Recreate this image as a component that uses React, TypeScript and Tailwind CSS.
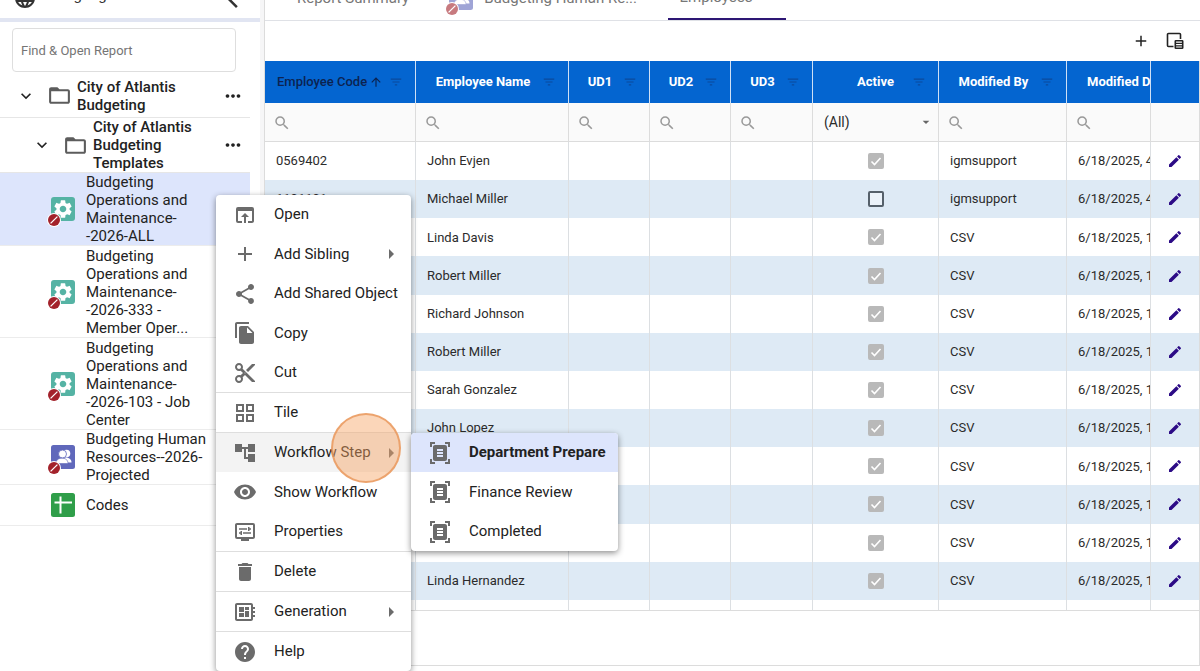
import type { ReactNode } from "react";
import type { IconType } from "react-icons";
import {
  MdAccountTree,
  MdAdd,
  MdArrowDropDown,
  MdArrowRight,
  MdArrowUpward,
  MdContentCut,
  MdDelete,
  MdDocumentScanner,
  MdEdit,
  MdExpandMore,
  MdFileCopy,
  MdFilterList,
  MdFolderOpen,
  MdGridView,
  MdHelp,
  MdLanguage,
  MdMoreHoriz,
  MdOpenInBrowser,
  MdOutlineDeveloperBoard,
  MdOutlineDisplaySettings,
  MdSearch,
  MdSettings,
  MdShare,
  MdVisibility,
  MdArrowBackIosNew,
} from "react-icons/md";

type ReportKind = "gear" | "people" | "codes";

function Blocked() {
  return (
    <svg viewBox="0 0 14 14" className="absolute -bottom-1.5 -left-1 size-3.5" aria-hidden="true">
      <circle cx="7" cy="7" r="7" fill="#fff" />
      <circle cx="7" cy="7" r="6" fill="#a3222b" />
      <path d="M3.6 10.4 10.4 3.6" stroke="#fff" strokeWidth="1.3" />
    </svg>
  );
}

function ReportIcon({ kind }: { kind: ReportKind }) {
  if (kind === "codes") {
    return (
      <svg viewBox="0 0 24 24" className="size-6 shrink-0" aria-hidden="true">
        <rect width="24" height="24" rx="2.5" fill="#2f9e49" />
        <path d="M9.5 3.5v17M3.5 9.5h17.5" stroke="#fff" strokeWidth="2" />
      </svg>
    );
  }
  return (
    <span className="relative block size-6 shrink-0">
      {kind === "gear" ? (
        <span className="flex size-6 items-center justify-center rounded-[3px] bg-[#55b3a4]">
          <MdSettings className="size-[22px] text-white" />
        </span>
      ) : (
        <svg viewBox="0 0 24 24" className="size-6" aria-hidden="true">
          <rect width="24" height="24" rx="2.5" fill="#6068bb" />
          <circle cx="15.5" cy="8.5" r="3.8" fill="#fff" />
          <path d="M13 12.5c4-.5 7.500 1 7.500 5h-5z" fill="#fff" />
          <circle cx="11.500" cy="9" r="4" fill="#fff" stroke="#6068bb" strokeWidth=".8" />
          <path d="M5 18.500c0-4 3-5.300 6-5.300s6 1.300 6 5.300z" fill="#fff" stroke="#6068bb" strokeWidth=".6" />
        </svg>
      )}
      <Blocked />
    </span>
  );
}

const reports: { kind: ReportKind; lines: string[]; size: string; selected?: boolean }[] = [
  { kind: "gear", lines: ["Budgeting", "Operations and", "Maintenance-", "-2026-ALL"], size: "min-h-[73px]", selected: true },
  { kind: "gear", lines: ["Budgeting", "Operations and", "Maintenance-", "-2026-333 -", "Member Oper..."], size: "min-h-[92px]" },
  { kind: "gear", lines: ["Budgeting", "Operations and", "Maintenance-", "-2026-103 - Job", "Center"], size: "min-h-[92px]" },
  { kind: "people", lines: ["Budgeting Human", "Resources--2026-", "Projected"], size: "min-h-[55px]" },
  { kind: "codes", lines: ["Codes"], size: "min-h-[41px]" },
];

function Folder({ lines, className }: { lines: string[]; className: string }) {
  return (
    <li className={`flex items-center border-b border-[#e6e6e6] pr-1.5 ${className}`}>
      <button aria-label="Collapse" className="flex size-5 items-center justify-center">
        <MdExpandMore className="size-5" />
      </button>
      <MdFolderOpen className="ml-[11px] size-[25px] shrink-0 text-[#5c5c5c]" />
      <span className="ml-[5px] flex-1 font-medium">
        {lines.map((l) => (
          <span key={l} className="block">{l}</span>
        ))}
      </span>
      <button aria-label="More">
        <MdMoreHoriz className="size-[22px]" />
      </button>
    </li>
  );
}

function Sidebar() {
  return (
    <aside className="flex w-[265px] shrink-0 flex-col border-r border-[#dcdcdc] bg-[#f6f6f7]">
      <div className="mr-1 flex flex-1 flex-col bg-white">
        <div className="flex h-[22px] shrink-0 items-end border-b-4 border-[#e1e5f2]">
          <div className="flex h-10 w-full items-center pr-4 pl-[13px] text-[15px] text-[#333]">
            <MdLanguage className="size-6 shrink-0" />
            <button className="ml-3 flex flex-1 items-center gap-2 pb-1.5">
              Language: US
              <MdExpandMore className="size-4" />
            </button>
            <button aria-label="Collapse sidebar">
              <MdArrowBackIosNew className="size-6" />
            </button>
          </div>
        </div>
        <div className="pt-1.5 pr-6 pl-3">
          <input
            aria-label="Find & Open Report"
            placeholder="Find & Open Report"
            className="h-11 w-full rounded border border-[#dedede] px-2 text-[13px] placeholder:text-[#757575]"
          />
        </div>
        <ul className="mr-2.5 text-[15px] leading-[18px] text-[#222]">
          <Folder lines={["City of Atlantis", "Budgeting"]} className="min-h-[46px] pt-0.5 pl-4" />
          <Folder lines={["City of Atlantis", "Budgeting", "Templates"]} className="min-h-[55px] pl-8" />
          {reports.map((r) => (
            <li
              key={r.lines.join()}
              className={`flex items-center gap-[11px] border-b border-[#ececec] pl-[51px] ${r.size} ${r.selected ? "bg-[#dde5fc]" : ""}`}
            >
              <ReportIcon kind={r.kind} />
              <a href="#report">
                {r.lines.map((l) => (
                  <span key={l} className="block whitespace-nowrap">{l}</span>
                ))}
              </a>
            </li>
          ))}
        </ul>
      </div>
    </aside>
  );
}

const columns = [
  { label: "Employee Name", width: "w-[153px]" },
  { label: "UD1", width: "w-[81px]" },
  { label: "UD2", width: "w-[81px]" },
  { label: "UD3", width: "w-[82px]" },
  { label: "Active", width: "w-[126px]" },
  { label: "Modified By", width: "w-[128px]" },
];

const rows = [
  { code: "0569402", name: "John Evjen", by: "igmsupport", time: "4:10 PM", active: true },
  { code: "1101101", name: "Michael Miller", by: "igmsupport", time: "4:10 PM", active: false },
  ...[
    "Linda Davis",
    "Robert Miller",
    "Richard Johnson",
    "Robert Miller",
    "Sarah Gonzalez",
    "John Lopez",
    "",
    "",
    "",
    "Linda Hernandez",
  ].map((name) => ({ code: "", name, by: "CSV", time: "1:15 PM", active: true })),
];

function Search({ label }: { label: string }) {
  return (
    <td className="border-r border-b border-[#dcdcdc] px-2 pt-0.5">
      <label className="flex items-center">
        <MdSearch className="size-[18px] shrink-0 text-[#999]" />
        <input aria-label={`Filter ${label}`} className="w-full min-w-0 bg-transparent outline-none" />
      </label>
    </td>
  );
}

function Check({ checked }: { checked: boolean }) {
  return (
    <span className="relative mx-auto block size-4">
      <input
        type="checkbox"
        aria-label="Active"
        defaultChecked={checked}
        disabled={checked}
        className="block size-4 appearance-none rounded-[2px] border-2 border-[#55606a] bg-white/40 checked:border-[#b9b9b9] checked:bg-[#b9b9b9]"
      />
      {checked && (
        <svg viewBox="0 0 16 16" className="pointer-events-none absolute inset-0 size-4" aria-hidden="true">
          <path d="m3.500 8.500 3 3 6-6.500" fill="none" stroke="#fff" strokeWidth="1.600" />
        </svg>
      )}
    </span>
  );
}

function Grid() {
  return (
    <div className="h-[550px] overflow-hidden border-b border-[#dcdcdc]">
      <table className="h-[577px] w-full table-fixed border-separate border-spacing-0 text-[13px] text-[#2b2b2b]">
        <colgroup>
          <col className="w-[151px]" />
          {columns.map((c) => (
            <col key={c.label} className={c.width} />
          ))}
          <col />
          <col className="w-12" />
        </colgroup>
        <thead>
          <tr className="h-[42px] bg-[#0465d0] text-white">
            <th className="border-r border-[#cfe0f5] py-0 pr-3 pl-3 font-medium text-[#0c2350]">
              <span className="flex items-center whitespace-nowrap">
                Employee Code
                <MdArrowUpward className="ml-0.5 size-3.5" />
                <MdFilterList className="ml-auto size-3.5 text-[#0b4a9b]" />
              </span>
            </th>
            {columns.map((c) => (
              <th key={c.label} className="border-r border-[#cfe0f5] py-0 pr-3 pl-3 font-bold">
                <span className="flex items-center gap-1 whitespace-nowrap">
                  <span className={c.label === "Active" ? "flex-1 pl-[18px]" : "flex-1"}>{c.label}</span>
                  <MdFilterList className="size-3.5 text-[#0b4a9b]" />
                </span>
              </th>
            ))}
            <th className="overflow-hidden border-r border-[#cfe0f5] pl-5 text-left font-bold whitespace-nowrap">Modified Date</th>
            <th aria-label="Actions" />
          </tr>
          <tr className="h-[39px] bg-[#fafafa]">
            <Search label="Employee Code" />
            {columns.map((c) =>
              c.label === "Active" ? (
                <td key={c.label} className="border-r border-b border-[#dcdcdc] pr-1 pl-[11px]">
                  <span className="relative flex items-center">
                    <select aria-label="Filter Active" className="w-full appearance-none bg-transparent text-[14px]">
                      <option>(All)</option>
                    </select>
                    <MdArrowDropDown className="pointer-events-none absolute right-0 size-4 text-[#666]" />
                  </span>
                </td>
              ) : (
                <Search key={c.label} label={c.label} />
              ),
            )}
            <Search label="Modified Date" />
            <td className="border-b border-[#dcdcdc]" />
          </tr>
        </thead>
        <tbody>
          {rows.map((r, i) => (
            <tr key={i} className="even:bg-[#deeaf5] [&>td]:border-[#dcdfe2] [&>td]:py-0 [&>td:not(:last-child)]:border-r [&>td:not(:last-child)]:px-[11px]">
              <td>{r.code}</td>
              <td>{r.name}</td>
              <td />
              <td />
              <td />
              <td><Check checked={r.active} /></td>
              <td>{r.by}</td>
              <td className="overflow-hidden whitespace-nowrap">{`6/18/2025, ${r.time}`}</td>
              <td>
                <button aria-label="Edit" className="mx-auto flex text-[#2c0b86]">
                  <MdEdit className="size-4" />
                </button>
              </td>
            </tr>
          ))}
          <tr className="h-[38px] [&>td]:border-[#dcdfe2] [&>td:not(:last-child)]:border-r">
            {Array.from({ length: 9 }, (_, i) => (
              <td key={i} />
            ))}
          </tr>
        </tbody>
      </table>
    </div>
  );
}

function Main() {
  return (
    <main className="flex min-w-0 flex-1 flex-col bg-white">
      <nav className="flex h-[21px] shrink-0 items-end border-b border-[#dfe1e6] text-[15px] text-[#777]">
        <a href="#summary" className="flex h-11 items-center px-8">Report Summary</a>
        <a href="#hr" className="flex h-11 items-center gap-[11px] pr-[31px] pl-2">
          <span className="opacity-60"><ReportIcon kind="people" /></span>
          Budgeting Human Re...
        </a>
        <a href="#employees" className="flex h-11 w-[118px] items-center justify-center border-b-2 border-[#2d1674] pr-[22px]">Employees</a>
      </nav>
      <div className="flex h-10 shrink-0 items-center justify-end gap-4 pr-4 text-[#222]">
        <button aria-label="Add row"><MdAdd className="size-[18px]" /></button>
        <button aria-label="Column chooser">
          <svg viewBox="0 0 18 18" className="size-[18px]" fill="none" stroke="#222" aria-hidden="true">
            <path d="M7.500 14.500H2.500a1 1 0 0 1-1-1V2.500a1 1 0 0 1 1-1H13.500a1 1 0 0 1 1 1V7" strokeWidth="1.600" />
            <rect x="9.300" y="8.800" width="7.400" height="7.400" rx=".5" strokeWidth="1.600" />
            <path d="M9.500 11.300h7M9.500 13.800h7" strokeWidth="1.300" />
          </svg>
        </button>
      </div>
      <div className="flex min-h-[605px] flex-col border-r border-b border-[#dcdcdc]">
        <Grid />
      </div>
    </main>
  );
}

function MenuItem({ icon: Icon, children, arrow, className = "" }: { icon: IconType; children: ReactNode; arrow?: boolean; className?: string }) {
  return (
    <li>
      <button role="menuitem" className={`flex w-full items-center pl-[17px] text-left whitespace-nowrap ${className}`}>
        <Icon className="size-6 shrink-0 text-[#6b6b6b]" />
        <span className="ml-[17px] flex-1">{children}</span>
        {arrow && <MdArrowRight className="mr-2 size-6 text-[#6b6b6b]" />}
      </button>
    </li>
  );
}

function ContextMenu() {
  const line = "border-t border-[#dedede]";
  return (
    <ul role="menu" className="absolute top-[195px] left-[216px] w-[195px] rounded bg-white text-[15px] text-[#222] shadow-[0_2px_6px_rgba(0,0,0,0.45)]">
      <MenuItem icon={MdOpenInBrowser} className="h-[39px]">Open</MenuItem>
      <MenuItem icon={MdAdd} arrow className="h-10">Add Sibling</MenuItem>
      <MenuItem icon={MdShare} className="h-[39px]">Add Shared Object</MenuItem>
      <MenuItem icon={MdFileCopy} className="h-10">Copy</MenuItem>
      <MenuItem icon={MdContentCut} className="h-[39px]">Cut</MenuItem>
      <MenuItem icon={MdGridView} className={`h-10 ${line}`}>Tile</MenuItem>
      <MenuItem icon={MdAccountTree} arrow className={`h-10 bg-[#f3f3f3] ${line}`}>Workflow Step</MenuItem>
      <MenuItem icon={MdVisibility} className="h-10">Show Workflow</MenuItem>
      <MenuItem icon={MdOutlineDisplaySettings} className="h-[39px]">Properties</MenuItem>
      <MenuItem icon={MdDelete} className={`h-10 ${line}`}>Delete</MenuItem>
      <MenuItem icon={MdOutlineDeveloperBoard} arrow className={`h-10 ${line}`}>Generation</MenuItem>
      <MenuItem icon={MdHelp} className={`h-10 ${line}`}>Help</MenuItem>
    </ul>
  );
}

function SubMenu() {
  return (
    <ul role="menu" className="absolute top-[433px] left-[411px] w-[207px] overflow-hidden rounded bg-white text-[15px] text-[#222] shadow-[0_2px_6px_rgba(0,0,0,0.45)]">
      <MenuItem icon={MdDocumentScanner} className="h-[39px] bg-[#dde5fc] font-bold">Department Prepare</MenuItem>
      <MenuItem icon={MdDocumentScanner} className="h-10">Finance Review</MenuItem>
      <MenuItem icon={MdDocumentScanner} className="h-[39px]">Completed</MenuItem>
    </ul>
  );
}

export default function App() {
  return (
    <div className="relative flex min-h-screen overflow-hidden bg-white font-[Roboto,sans-serif]">
      <Sidebar />
      <Main />
      <ContextMenu />
      <SubMenu />
      <span className="pointer-events-none absolute top-[413px] left-[331px] size-[70px] rounded-full border-2 border-[#e8965a]/80 bg-[#f7a463]/45" />
    </div>
  );
}
